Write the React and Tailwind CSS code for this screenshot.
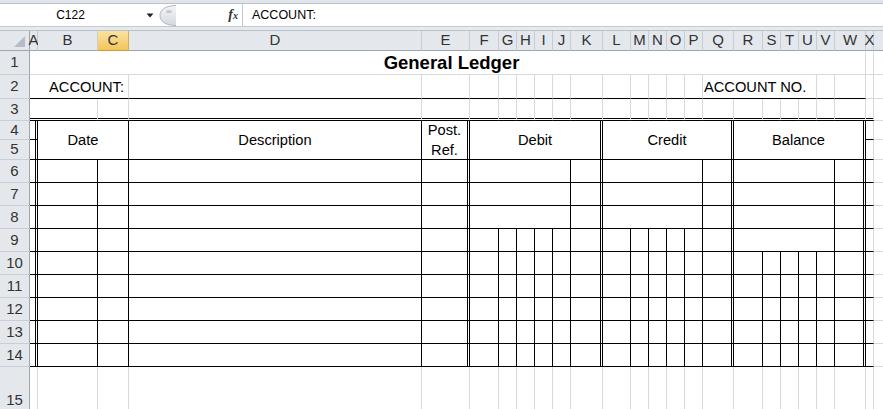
import React from 'react';

const FONT = "font-['Liberation_Sans',Arial,sans-serif]";

const RB = {
  g: 'border-r border-r-[#d8dadd]',
  b: 'border-r border-r-black',
  d: 'border-r-[3px] border-r-black',
  n: 'border-r-0',
};
const BB = {
  g: 'border-b border-b-[#d8dadd]',
  b: 'border-b border-b-black',
  d: 'border-b-[3px] border-b-black',
  n: 'border-b-0',
};
const SPAN = { 1: '', 2: 'col-span-2', 3: 'col-span-3', 5: 'col-span-5', 6: 'col-span-6', 22: 'col-span-22' };
const RSPAN = { 1: '', 2: 'row-span-2' };

const c = (r, b, opts = {}) => ({ r, b, s: 1, rs: 1, ...opts });
const rep = (n, r, b) => Array.from({ length: n }, () => c(r, b));

function tableRow(splitD, splitC, splitB) {
  const group = (split) => (split ? rep(5, 'b', 'b') : [c('b', 'b', { s: 5 })]);
  return [
    c('d', 'b'), c('b', 'b'), c('b', 'b'), c('b', 'b'), c('d', 'b'),
    ...group(splitD), c('d', 'b'),
    ...group(splitC), c('d', 'b'),
    ...group(splitB), c('d', 'b'),
    c('g', 'b'), c('g', 'g'),
  ];
}

const ROWS = [
  // 1
  [
    c('n', 'g'),
    c('g', 'g', { s: 22, cls: 'justify-center font-bold text-[18.5px]', text: 'General Ledger' }),
    c('g', 'g'),
    c('g', 'g'),
  ],
  // 2
  [
    c('g', 'b', { s: 3, cls: 'justify-end pr-[4px]', text: 'ACCOUNT:' }),
    c('g', 'b'),
    ...rep(12, 'g', 'b'),
    c('g', 'b', { s: 5, cls: 'justify-start pl-[1px]', text: 'ACCOUNT NO.' }),
    c('g', 'b'),
    c('g', 'b'),
    c('g', 'g'),
    c('g', 'g'),
  ],
  // 3
  [c('n', 'd'), ...rep(22, 'g', 'd'), c('g', 'd'), c('g', 'g')],
  // 4
  [
    c('d', 'b'),
    c('b', 'b', { s: 2, rs: 2, cls: 'justify-center', text: 'Date' }),
    c('b', 'b', { rs: 2, cls: 'justify-center', text: 'Description' }),
    c('d', 'b', { rs: 2, cls: 'justify-center', lines: ['Post.', 'Ref.'] }),
    c('d', 'b', { s: 6, rs: 2, cls: 'justify-center', text: 'Debit' }),
    c('d', 'b', { s: 6, rs: 2, cls: 'justify-center', text: 'Credit' }),
    c('d', 'b', { s: 6, rs: 2, cls: 'justify-center', text: 'Balance' }),
    c('g', 'b'),
    c('g', 'g'),
  ],
  // 5
  [c('d', 'b'), c('g', 'b'), c('g', 'g')],
  // 6-8
  tableRow(false, false, false),
  tableRow(false, false, false),
  tableRow(false, false, false),
  // 9
  tableRow(true, true, false),
  // 10-14
  tableRow(true, true, true),
  tableRow(true, true, true),
  tableRow(true, true, true),
  tableRow(true, true, true),
  tableRow(true, true, true),
  // 15
  rep(25, 'g', 'g'),
];

const LETTERS = ['A', 'B', 'C', 'D', 'E', 'F', 'G', 'H', 'I', 'J', 'K', 'L', 'M', 'N', 'O', 'P', 'Q', 'R', 'S', 'T', 'U', 'V', 'W', 'X', ''];

function Cell({ cell }) {
  return (
    <div
      className={[
        'border-double flex items-center min-w-0 whitespace-nowrap',
        RB[cell.r],
        BB[cell.b],
        SPAN[cell.s],
        RSPAN[cell.rs],
        cell.cls || '',
      ].join(' ')}
    >
      {cell.lines ? (
        <div className="flex flex-col items-center leading-[20px]">
          {cell.lines.map((t) => (
            <span key={t}>{t}</span>
          ))}
        </div>
      ) : (
        cell.text
      )}
    </div>
  );
}

function FormulaBar() {
  return (
    <div className="h-[31px] flex flex-col bg-[#e6e9ed]">
      <div className="h-[4px] bg-[#e1e5ea] border-b border-b-[#b9c1cb]" />
      <div className="h-[23px] flex bg-white border-b border-b-[#c3c9d1]">
        <div className="w-[158px] flex items-center">
          <div className="w-[141px] text-center text-[12px] text-black">C122</div>
          <svg width="8" height="5" viewBox="0 0 8 5" className="ml-[5px]">
            <path d="M0.5 0.5 L7.5 0.5 L4 4.5 Z" fill="#222" />
          </svg>
        </div>
        <div className="w-[20px] flex items-center justify-start">
          <svg width="19" height="21" viewBox="0 0 19 21">
            <defs>
              <linearGradient id="bulb" x1="0" y1="0" x2="0" y2="1">
                <stop offset="0" stopColor="#f4f5f7" />
                <stop offset="1" stopColor="#d5d9df" />
              </linearGradient>
            </defs>
            <path d="M18 0.5 C8 0.5 2 4.5 2 10.5 C2 16.5 8 20.5 18 20.5" fill="url(#bulb)" stroke="#aeb5bf" strokeWidth="1" />
            <ellipse cx="11" cy="6.5" rx="3" ry="1.6" fill="#c4c9d0" />
          </svg>
        </div>
        <div className="w-[65px] flex items-center justify-end pr-[4px] border-r border-r-[#c3c9d1]">
          <span className="font-['Liberation_Serif',serif] italic font-bold text-[14px] text-[#333] leading-none">
            f<span className="text-[10px]">x</span>
          </span>
        </div>
        <div className="flex-1 flex items-center pl-[9px] text-[12.5px] text-black">ACCOUNT:</div>
      </div>
      <div className="flex-1 bg-[#e6e9ed] border-b border-b-[#b9c1cb]" />
    </div>
  );
}

export default function App() {
  return (
    <div className={`w-[883px] h-[409px] overflow-hidden bg-white ${FONT}`}>
      <FormulaBar />
      <div className="w-[934px] grid grid-cols-[30px_8px_60px_31px_293px_48px_29px_18px_18px_18px_18px_32px_28px_18px_18px_18px_18px_31px_29px_18px_18px_18px_18px_31px_8px_60px] grid-rows-[20px_24px_24px_22px_19px_20px_repeat(9,23px)_68px] text-[14.67px] text-black">
        {/* corner */}
        <div className="bg-[#e4e8ed] border-r border-r-[#9ea6b0] border-b border-b-[#9ea6b0] flex items-end justify-end pr-[4px] pb-[3px]">
          <svg width="11" height="11" viewBox="0 0 11 11">
            <path d="M11 0 L11 11 L0 11 Z" fill="#b5bcc5" />
          </svg>
        </div>
        {LETTERS.map((l, k) =>
          l === 'C' ? (
            <div
              key={k}
              className="bg-gradient-to-b from-[#fae3a0] to-[#f3c458] border-r border-r-[#d9ac4a] border-b border-b-[#c99a3a] flex items-center justify-center text-[15px] text-[#333]"
            >
              {l}
            </div>
          ) : (
            <div
              key={k}
              className="bg-[#e4e8ed] border-r border-r-[#c6ccd3] border-b border-b-[#9ea6b0] flex items-center justify-center text-[15px] text-[#333]"
            >
              {l}
            </div>
          )
        )}
        {ROWS.map((row, i) => (
          <React.Fragment key={i}>
            <div className="bg-[#e4e8ed] border-r border-r-[#9ea6b0] border-b border-b-[#c9ced5] flex items-center justify-center text-[15px] text-[#333]">
              {i + 1}
            </div>
            {row.map((cell, j) => (
              <Cell key={j} cell={cell} />
            ))}
          </React.Fragment>
        ))}
      </div>
    </div>
  );
}
